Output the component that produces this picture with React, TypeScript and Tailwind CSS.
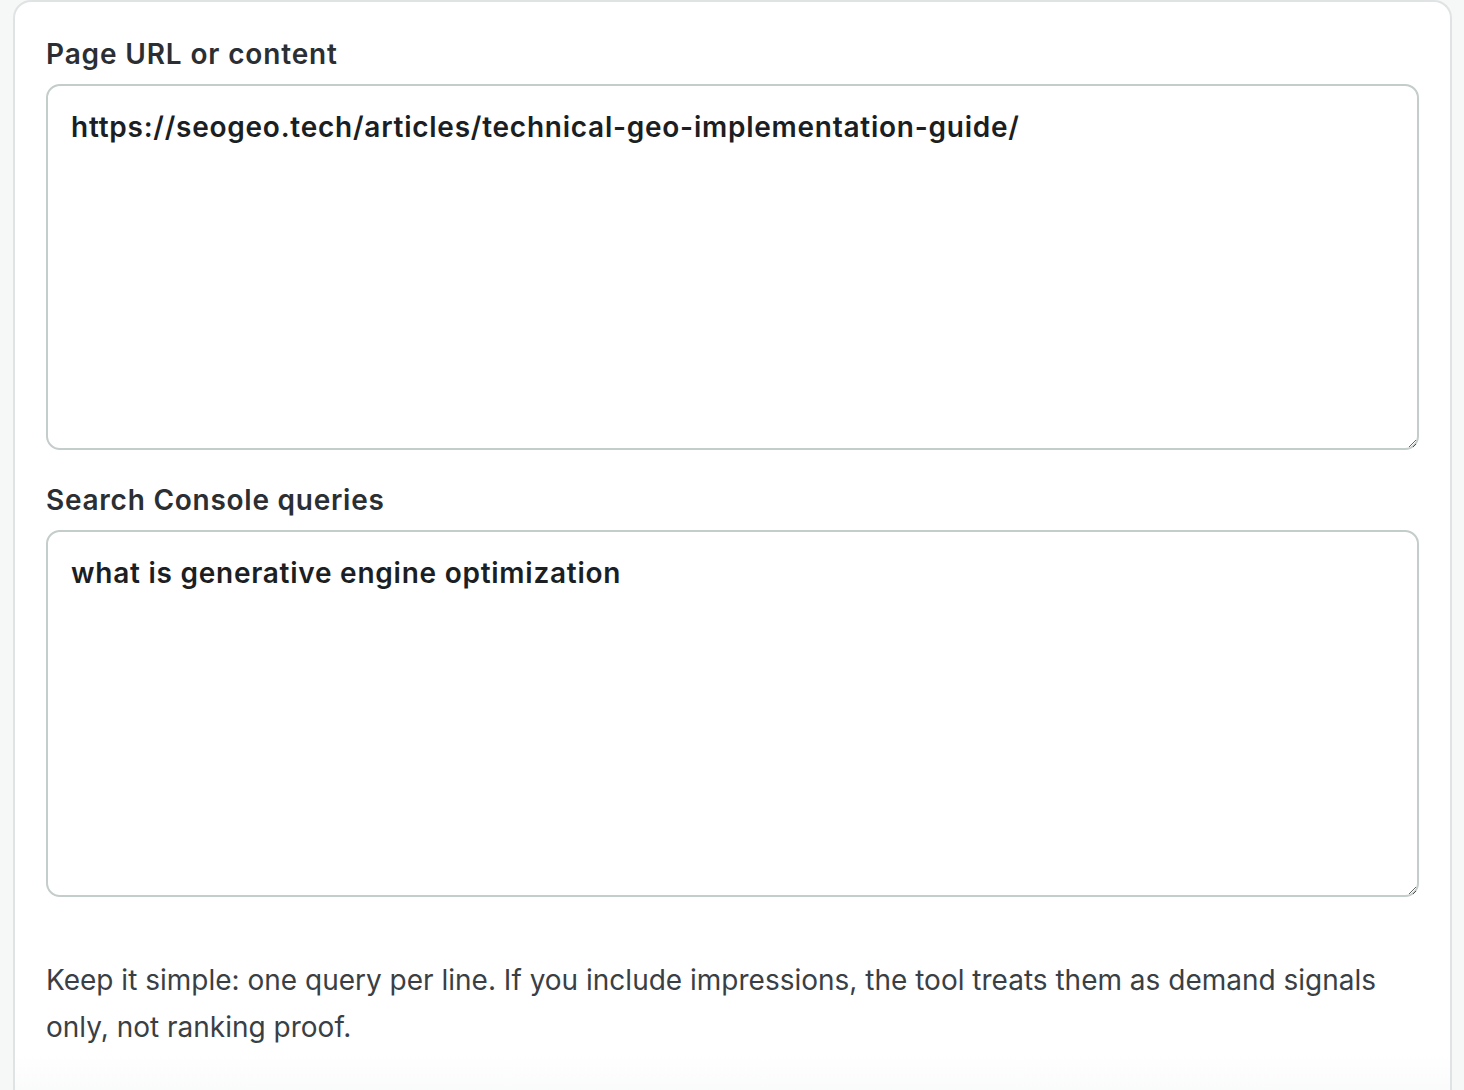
export default function App() {
  return (
    <div className="min-h-screen bg-[#f6f7f7] pl-[13px] pr-[12px] font-['Inter','Noto_Sans',sans-serif]">
      <div className="rounded-t-[18px] border-2 border-b-0 border-[#dfe3e3] bg-white">
        <div className="px-[31px] pt-[32px]">
          {/* Page URL field */}
          <label className="mb-[10px] block text-[28px] leading-[40px] font-semibold tracking-[0.85px] text-[#2b2f34]">
            Page URL or content
          </label>
          <textarea
            defaultValue="https://seogeo.tech/articles/technical-geo-implementation-guide/"
            className="block h-[366px] w-full rounded-[14px] border-2 border-[#c4cdcb] bg-white px-[23px] py-[20px] text-[28px] leading-[42px] font-semibold tracking-[0.75px] text-[#1b1e22] outline-none"
          />

          {/* Search Console queries field */}
          <label className="mt-[30px] mb-[10px] block text-[28px] leading-[40px] font-semibold tracking-[0.75px] text-[#2b2f34]">
            Search Console queries
          </label>
          <textarea
            defaultValue="what is generative engine optimization"
            className="block h-[367px] w-full rounded-[14px] border-2 border-[#c4cdcb] bg-white px-[23px] py-[20px] text-[28px] leading-[42px] font-semibold tracking-[0.75px] text-[#1b1e22] outline-none"
          />

          <p className="mt-[60px] text-[28px] leading-[47px] text-[#3a3f45]">
            Keep it simple: one query per line. If you include impressions, the tool treats them as demand signals
            <br />
            only, not ranking proof.
          </p>
        </div>
        <div className="mt-[4px] h-[60px] bg-gradient-to-b from-white to-[#f7f8f8]" />
      </div>
    </div>
  )
}
